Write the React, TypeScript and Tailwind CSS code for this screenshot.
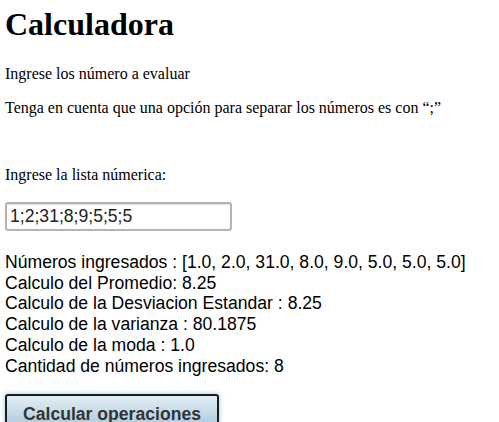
import { useState } from "react";

const results = [
  "Números ingresados : [1.0, 2.0, 31.0, 8.0, 9.0, 5.0, 5.0, 5.0]",
  "Calculo del Promedio: 8.25",
  "Calculo de la Desviacion Estandar : 8.25",
  "Calculo de la varianza : 80.1875",
  "Calculo de la moda : 1.0",
  "Cantidad de números ingresados: 8",
];

const App = (): JSX.Element => {
  const [lista, setLista] = useState<string>("1;2;31;8;9;5;5;5");

  return (
    <div className="min-h-screen bg-white pl-[5px] text-black font-['Liberation_Serif',serif]">
      <h1 className="pt-0 text-[32px] font-bold leading-normal">Calculadora</h1>

      <p className="mt-[16.5px] text-[16px] leading-[18.4px]">Ingrese los número a evaluar</p>
      <p className="mt-[16px] text-[16px] leading-[18.4px]">
        Tenga en cuenta que una opción para separar los números es con “;”
      </p>

      <p className="mt-[49px] text-[16px] leading-[18.4px]">Ingrese la lista númerica:</p>

      <input
        type="text"
        value={lista}
        onChange={(e) => setLista(e.target.value)}
        className="mt-[17px] block h-[29px] w-[227px] rounded-[3px] border-2 border-[#b4b4b4] px-[3px] text-[17.6px] text-[#222] font-['Liberation_Sans',Arial,sans-serif] shadow-[inset_0_1px_1px_rgba(0,0,0,0.12)] outline-none"
      />

      <div className="mt-[21px] text-[17.6px] leading-[20.8px] font-['Liberation_Sans',Arial,sans-serif]">
        {results.map((r) => (
          <div key={r}>{r}</div>
        ))}
      </div>

      <button className="mt-[17px] w-[214px] rounded-[3px] border-2 border-[#1c1c1c] bg-gradient-to-b from-[#e2eef5] to-[#9fc3d8] pt-[5px] pb-[6px] text-[17.6px] font-bold text-[#333] font-['Liberation_Sans',Arial,sans-serif] shadow-[0_0_4px_1px_rgba(150,200,230,0.7)]">
        Calcular operaciones
      </button>
    </div>
  );
};

export default App;
